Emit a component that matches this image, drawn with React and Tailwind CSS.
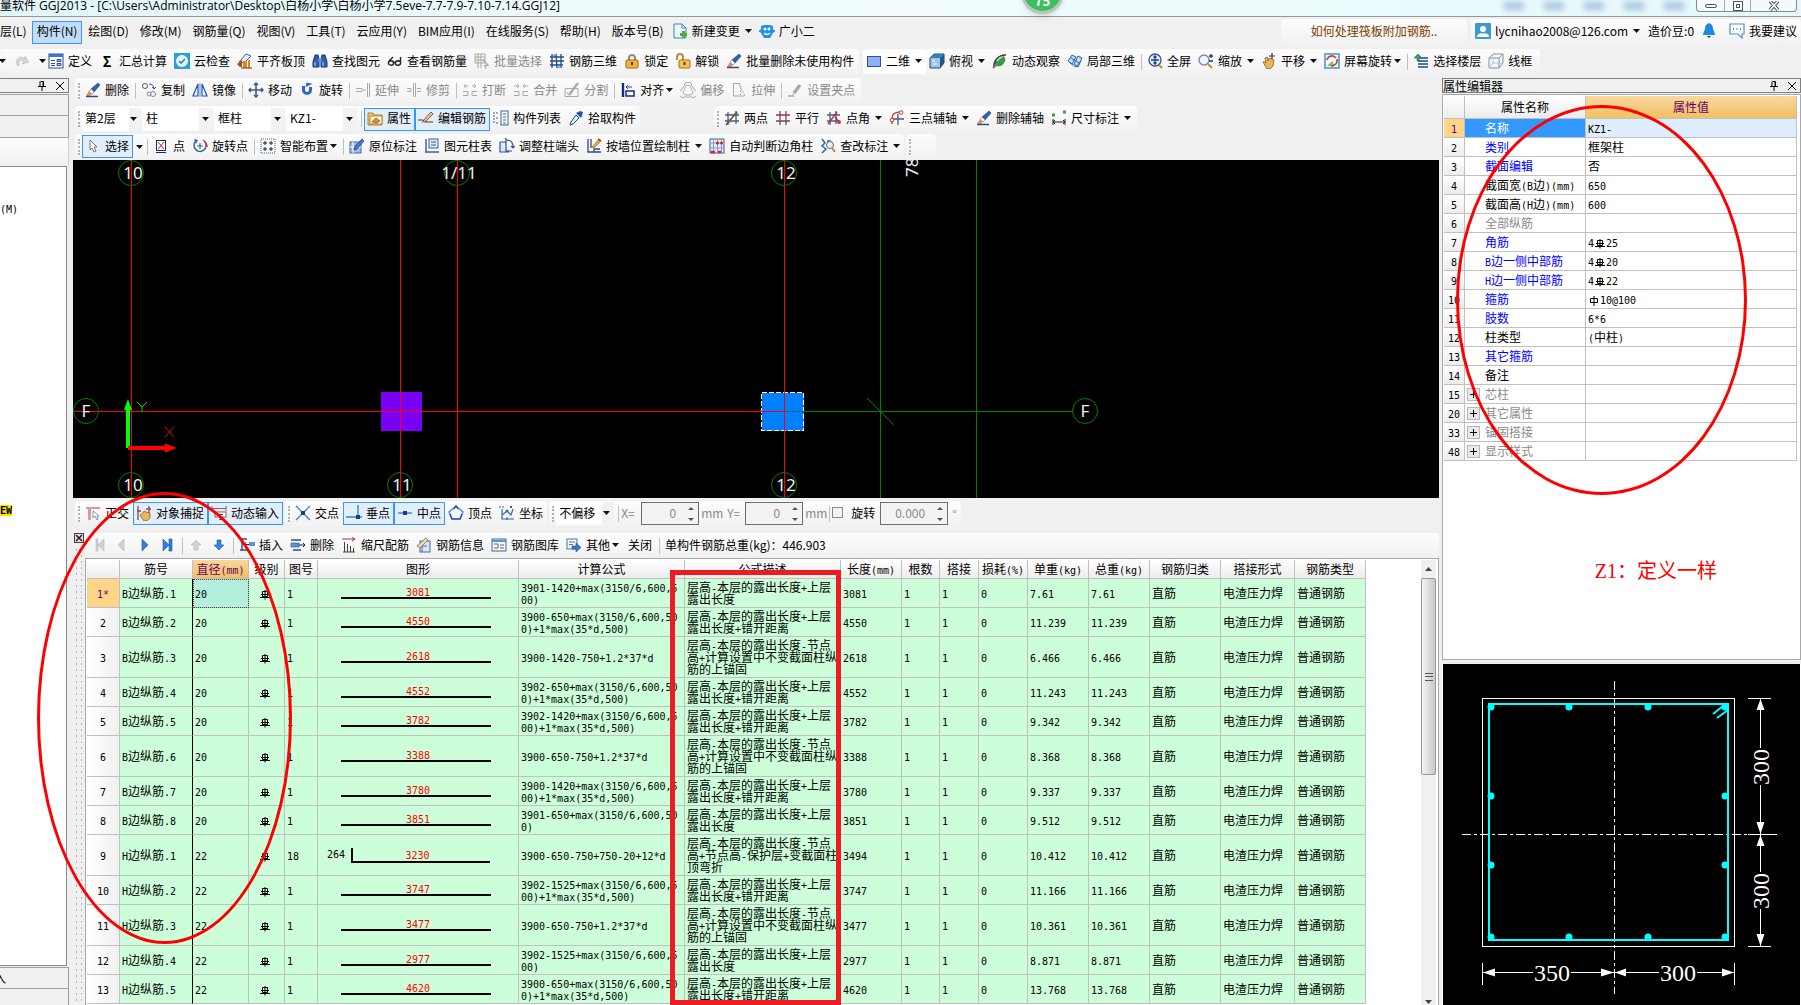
import clsx from "clsx";

// 16x16 toolbar drawings
const ICONS = {
  redo: <path d="M3 12C1 5 7 2 11 6V3l4 6-7 2 2-3C7 6 4 8 5 13z" fill="#d6d6d6" stroke="#b5b5b5" strokeWidth=".6" />,
  define: (
    <>
      <rect x="1" y="1" width="14" height="14" fill="#fff" stroke="#2f4f8f" />
      <rect x="1" y="1" width="14" height="3" fill="#3f74c9" />
      <path d="M3 7.500h4M3 10.500h4M9 6.500h4v2H9zM9 10.500h4v2H9zM3 12.500h4" stroke="#2f4f8f" fill="#a8c4ee" />
    </>
  ),
  cloud: (
    <>
      <rect width="16" height="16" fill="#2f9fdc" />
      <circle cx="8" cy="8" r="6" fill="#e9f6ff" />
      <path d="m5 8 2 2 4-4" fill="none" stroke="#2d86c4" strokeWidth="1.600" />
    </>
  ),
  flush: (
    <>
      <path d="M2 9 9 1l5 2-7 7z" fill="#e8eef8" stroke="#3c61a8" />
      <path d="M0 11l5-4v7H3z" fill="#a94b1c" />
      <path d="M7 15V9h2v6M12 15V7" stroke="#d98a1d" strokeWidth="2" fill="none" />
      <path d="M4 15h11" stroke="#7d2e0c" />
    </>
  ),
  find: (
    <>
      <path d="M3 2h3l1 4v8H1V9zM10 2h3l2 7v5H9V6z" fill="#2f5fae" stroke="#173a78" />
      <path d="M6 6h4v3H6z" fill="#5d8cd6" />
      <path d="M3 9v4M11 9v4" stroke="#b9d2f5" />
    </>
  ),
  glasses: (
    <g fill="none" stroke="#222" strokeWidth="1.400">
      <ellipse cx="4" cy="10" rx="2.600" ry="2.200" />
      <ellipse cx="11" cy="10" rx="2.600" ry="2.200" />
      <path d="M6.500 9.500h2M2 8l4-4M13.500 9V4" />
    </g>
  ),
  batch: (
    <g stroke="#a8a8a8" fill="none">
      <path d="M1 1h10v9H1zM1 4h10M1 7h10M4 1v14M7 1v14" />
      <path d="m9 7 5 5-3 .500 1 3" strokeWidth="1.400" />
    </g>
  ),
  rebar3d: (
    <g stroke="#1e4b82" fill="none" strokeWidth="1.300">
      <path d="M1 4h14M1 8h14M1 12h13M3 1v14M7 1l1 14M12 1v14" />
      <path d="M3 3 8 1M8 15l5-2" stroke="#5c92cc" />
    </g>
  ),
  lock: (
    <>
      <path d="M5 8V5a3 3 0 0 1 6 0v3" fill="none" stroke="#8c8c8c" strokeWidth="2" />
      <rect x="2" y="7" width="12" height="8" rx="1" fill="#eeb53a" stroke="#9c6d10" />
      <path d="M8 9v3" stroke="#5a3a00" strokeWidth="2" />
    </>
  ),
  unlock: (
    <>
      <path d="M2 7V4a3 3 0 0 1 6 0v4" fill="none" stroke="#b2903f" strokeWidth="2" />
      <rect x="4" y="7" width="11" height="8" rx="1" fill="#f3c558" stroke="#9c6d10" />
      <path d="M9.500 9v3" stroke="#5a3a00" strokeWidth="2" />
    </>
  ),
  brush: (
    <>
      <path d="M13 1 15 3 9 10 6 7z" fill="#2d62b8" stroke="#173a78" strokeWidth=".6" />
      <path d="M6 7l3 3-2 2-3-3z" fill="#fff" stroke="#8a8a8a" strokeWidth=".7" />
      <path d="M4 9l3 3-2 2H1z" fill="#e08a68" />
      <path d="M1 14.500h12" stroke="#2e5276" strokeWidth="1.500" />
    </>
  ),
  plane: <rect x="1.500" y="3.500" width="13" height="10" fill="#8fb0f7" stroke="#2b4fae" />,
  cube: (
    <>
      <path d="M1 5 5 1h10v9l-4 5H1z" fill="#9cc6ea" stroke="#21496f" />
      <path d="M1 5h10l4-4H5z" fill="#3c7db5" />
      <path d="M11 5v10l4-5V1z" fill="#245a8a" />
      <path d="M3 8h3M4 11h4" stroke="#fff" />
    </>
  ),
  orbit: (
    <>
      <ellipse cx="8" cy="8" rx="6" ry="4.500" transform="rotate(-45 8 8)" fill="#2f9e44" />
      <path d="M2 14C1 8 8 1 14 2" fill="none" stroke="#2b3f55" strokeWidth="1.500" />
      <path d="M5 8c2-3 4-4 6-4" stroke="#bdf0c4" strokeWidth="1.500" fill="none" />
      <circle cx="11" cy="5" r="1.500" fill="#e8534a" />
      <path d="m1 15 4-4" stroke="#777" strokeWidth="2" />
    </>
  ),
  local3d: (
    <g fill="#c4dcf4" stroke="#2b5f9a">
      <path d="M1 8 5 2l4 2-4 7z" />
      <path d="m7 11 4-8 4 2-4 9z" />
      <path d="m3 10 6 4 5-6M4 5l8 5" fill="none" />
    </g>
  ),
  fullscreen: (
    <>
      <circle cx="8" cy="7" r="6" fill="#e4effc" stroke="#3a5583" strokeWidth="1.300" />
      <path d="M8 3v8M4 7h8M6.500 4.500 8 3l1.500 1.500M6.500 9.500 8 11l1.500-1.500" stroke="#1c3f86" strokeWidth="1.300" fill="none" />
      <path d="m12 12 3 3" stroke="#c8862c" strokeWidth="2" />
    </>
  ),
  zoom: (
    <>
      <circle cx="6" cy="7" r="5" fill="#eef5fd" stroke="#7c8ca5" strokeWidth="1.400" />
      <path d="m10 11 4 4" stroke="#c8862c" strokeWidth="2" />
      <path d="M13 1v4M11 3h4M11 8h4" stroke="#203a66" strokeWidth="1.300" />
    </>
  ),
  pan: (
    <>
      <path d="M2 9c1-1 2 0 3 1l-1-5 2-1 1 4 1-3 5 2-1 6-3 3H6z" fill="#e6b85a" stroke="#83602a" strokeWidth=".8" />
      <path d="M11 0v6M8 3h6" stroke="#333" strokeWidth="1.200" />
    </>
  ),
  rotateScreen: (
    <>
      <rect x="1" y="1" width="14" height="14" fill="#fff" stroke="#5fb4dc" strokeWidth="2" />
      <path d="m3 13 5-5 3 5z" fill="#7cc46e" />
      <path d="M3 7a5 5 0 0 1 9-2" fill="none" stroke="#d8403c" strokeWidth="1.800" />
      <path d="M13 6c1 4-2 7-6 7" fill="none" stroke="#d8403c" strokeWidth="1.800" />
    </>
  ),
  floors: (
    <>
      <path d="M5 5h10M5 8h10M5 11h10M5 14h10" stroke="#1d4e86" strokeWidth="1.600" />
      <path d="M1 5 5 1l4 4H6v3H4V5z" fill="#38a169" stroke="#1c5c38" strokeWidth=".5" />
    </>
  ),
  wire: (
    <g fill="none" stroke="#7b92ae">
      <path d="M1 5 5 1h10v9l-4 5H1zM1 5h10v10M11 5l4-4" />
      <path d="M5 1v9h10M5 10l-4 5" stroke="#b5c4d6" />
    </g>
  ),
  copy: (
    <g fill="none" stroke="#555">
      <circle cx="4" cy="4" r="2.500" />
      <circle cx="12" cy="12" r="2.500" stroke="#8a8a8a" />
      <circle cx="8" cy="12" r="2" stroke="#8a8a8a" />
      <path d="M8 2c3 0 5 2 5 5M11 5l2 2 2-2" stroke="#1f57b8" />
    </g>
  ),
  mirror: (
    <g fill="none" stroke="#2456a8" strokeWidth="1.200">
      <path d="M6 2v12H1zM10 2v12h5z" />
      <path d="M8 1v14" stroke="#7ba3dc" />
    </g>
  ),
  move: (
    <g stroke="#32558e" strokeWidth="1.500" fill="none">
      <path d="M8 1v14M1 8h14" />
      <path d="M6 3l2-2 2 2M6 13l2 2 2-2M3 6 1 8l2 2M13 6l2 2-2 2" />
    </g>
  ),
  rotate: (
    <>
      <path d="M4.500 4v4a3.500 3.500 0 1 0 7 0V5" fill="none" stroke="#2f66c8" strokeWidth="3" />
      <path d="M7 6V1h6z" fill="#2f66c8" transform="rotate(12 10 3)" />
    </>
  ),
  extend: (
    <g stroke="#aaa" fill="none">
      <path d="M1 6.500h6v3H1M8 8h3" />
      <path d="M12.500 1v14M14.500 1v14" />
    </g>
  ),
  trim: (
    <g stroke="#aaa" fill="none">
      <path d="M1 6.500h4v3H1M11 6.500h4M11 9.500h4" />
      <path d="M7.500 1v14M9.500 1v14" />
    </g>
  ),
  split: (
    <g stroke="#aaa" fill="none">
      <path d="M1 9.500h5v4H1M15 9.500h-5v4h5M2 4h4M10 4h4M4 2 2 4l2 2M12 2l2 2-2 2" />
    </g>
  ),
  merge: (
    <g stroke="#aaa" fill="none">
      <path d="M1 9.500h5v4H1M15 9.500h-5v4h5M1 4h5M10 4h5M4 2l2 2-2 2M12 2l-2 2 2 2" />
    </g>
  ),
  divide: (
    <g stroke="#aaa" fill="none">
      <path d="M1 6.500h13v8H1z" />
      <path d="M5 13 14 1" strokeWidth="2.400" />
      <path d="m2 10 3 3" />
    </g>
  ),
  align: (
    <>
      <path d="M3 1v14" stroke="#172c7a" strokeWidth="2.400" />
      <path d="M6 9h8v5H6z" fill="#fff" stroke="#172c7a" strokeWidth="1.500" />
      <path d="M12 5H6M8 3 6 5l2 2" stroke="#2a3ea0" fill="none" />
    </>
  ),
  offset: (
    <g fill="none" stroke="#aaa">
      <path d="M5 6a3 3 0 0 1 6 0l1 2a3 3 0 0 1-2 5H6a3 3 0 0 1-2-5z" />
      <path d="M4 4a4 4 0 0 1 8 0l3 4a4 4 0 0 1-4 7H5a4 4 0 0 1-4-7z" />
    </g>
  ),
  stretch: (
    <g fill="none" stroke="#aaa">
      <path d="M2 1.500h7v3M2.500 1v13h11" />
      <path d="m9 4 5 10M9.500 5v9" strokeDasharray="2 1" />
    </g>
  ),
  grip: (
    <g fill="none" stroke="#aaa">
      <path d="M1 14h6" strokeWidth="1.500" />
      <path d="M7 11 13 3" strokeWidth="3.500" />
      <path d="M5 14l2-3" />
    </g>
  ),
  props: (
    <>
      <path d="M1 3h5l1 2h8v10H1z" fill="#f0c26a" stroke="#b5832a" />
      <rect x="3" y="6" width="12" height="8" fill="#fff7df" stroke="#b5832a" />
      <path d="m5 12 4-4 4 3-3 2z" fill="#d98f2a" stroke="#6f4510" strokeWidth=".6" />
    </>
  ),
  editBar: (
    <>
      <path d="M0 10h5l2 2h8" stroke="#3a3a3a" fill="none" />
      <path d="m5 11 8-9 2 2-8 8z" fill="#e8c79a" stroke="#5a4020" strokeWidth=".8" />
      <path d="M3 13l2-2 1 1z" fill="#c0392b" />
    </>
  ),
  list: (
    <>
      <rect x="8" y="1" width="7" height="14" fill="#fff" stroke="#3c5f96" />
      <path d="M10 4h3M10 7h3M10 10h3M10 13h3" stroke="#3c5f96" />
      <path d="M1 2v12M3 3h3M3 8h3M3 13h3" stroke="#3c5f96" strokeDasharray="2 1" />
    </>
  ),
  picker: (
    <>
      <path d="m8 5 3 3-6 6-3 1 1-3z" fill="#dcecfb" stroke="#1b4d86" />
      <path d="m8 3 5 5 1-2 1-4-3-1-2 1z" fill="#1f5c9e" />
    </>
  ),
  twoPoint: (
    <>
      <path d="M4 2v13M12 1v13M1 5h14M1 11h14" stroke="#4a5b86" strokeWidth="1.300" />
      <path d="m2 15 11-13" stroke="#8c2a2a" strokeWidth="1.300" />
      <circle cx="12" cy="4" r="1.700" fill="#2e8b3d" />
      <circle cx="5" cy="11" r="1.700" fill="#2e8b3d" />
    </>
  ),
  parallel: (
    <>
      <path d="M5 1v14M11 1v14" stroke="#4a5b86" strokeWidth="1.300" />
      <path d="M1 5h14M1 11h14" stroke="#a33" strokeWidth="1.300" />
    </>
  ),
  pointAngle: (
    <>
      <path d="M4 2v13M10 1v13M1 5h13M1 11h10" stroke="#4a5b86" strokeWidth="1.300" />
      <path d="m2 14 9-12M9 7l4 5" stroke="#b33" strokeWidth="1.300" />
      <circle cx="13" cy="12" r="2" fill="#d33" />
    </>
  ),
  threePoint: (
    <>
      <path d="M9 4v11M4 9h11" stroke="#4a5b86" strokeWidth="1.300" />
      <path d="M3 14V8c0-4 3-6 9-6" fill="none" stroke="#c33" strokeWidth="1.300" />
      <circle cx="3" cy="10" r="1.800" fill="#fff" stroke="#c33" />
      <circle cx="12" cy="2.500" r="1.800" fill="#fff" stroke="#c33" />
    </>
  ),
  dim: (
    <>
      <path d="M1 5h3M12 2h3" stroke="#3ba34a" strokeWidth="3" />
      <path d="M2 9v6M14 9v6M2 12h12M4 10l-2 2 2 2M12 10l2 2-2 2" stroke="#222" fill="none" />
    </>
  ),
  cursor: <path d="M5 2v10l2-2 2 4 2-1-2-4h3z" fill="#fff" stroke="#777" />,
  point: (
    <>
      <rect x="3.500" y="2.500" width="9" height="10" fill="#fff" stroke="#1b2a6b" />
      <path d="m5 4 6 7M11 4l-6 7" stroke="#b22" />
      <path d="M3 14.500h10" stroke="#1b2a6b" />
    </>
  ),
  rotPoint: (
    <>
      <path d="M4 3a6 6 0 1 0 9 1" fill="none" stroke="#41618f" strokeWidth="1.500" />
      <path d="M8 5v6M5 8h6" stroke="#41618f" strokeWidth="1.200" />
      <path d="m2 1 4 1-2 4z" fill="#2b64b8" />
      <path d="M11 2c3 2 4 4 4 7" fill="none" stroke="#c33" strokeWidth="1.500" />
    </>
  ),
  smart: (
    <g stroke="#222" fill="none">
      <rect x="1" y="1" width="14" height="14" strokeDasharray="1 1" stroke="#3a64a5" />
      <path d="M5 3v4M3 5h4M11 3v4M9 5h4M5 9v4M3 11h4M11 9v4M9 11h4" />
    </g>
  ),
  inPlace: (
    <>
      <rect x="1" y="4" width="11" height="11" fill="#9dbbe8" stroke="#426aa8" />
      <path d="M4 4v11M1 9h11" stroke="#fff" />
      <path d="m5 12 1-4 7-7 2 2-7 8z" fill="#3d7bc6" stroke="#1c3c6e" strokeWidth=".7" />
    </>
  ),
  colTable: (
    <>
      <path d="M2 1v13M1 14h14" stroke="#3c5f96" strokeWidth="1.400" />
      <rect x="5" y="1" width="9" height="9" fill="#dfe9f8" stroke="#3c5f96" />
      <path d="M7 4h5M7 7h5" stroke="#3c5f96" />
    </>
  ),
  colEnd: (
    <g fill="none" stroke="#35558e" strokeWidth="1.200">
      <path d="M1 4h6v9h6M1 4v10h9" fill="#dbe7f8" />
      <path d="M8 2c4 0 6 3 6 7M6 4l2-2-2-2M12 8l2 2 2-2" />
    </g>
  ),
  wallDraw: (
    <>
      <path d="M2 1v13h13M5 1v9M8 14v-3h6" stroke="#2e4a86" fill="none" strokeWidth="1.300" />
      <path d="m6 9 7-8 2 2-7 7z" fill="#e3b04a" stroke="#80541b" strokeWidth=".6" />
      <path d="M12 1l3 2" stroke="#c33" strokeWidth="1.600" />
    </>
  ),
  autoCol: (
    <>
      <rect x="1" y="1" width="14" height="14" fill="#e4eefb" stroke="#3c5f96" />
      <path d="M4.500 1v14M8.500 1v14M12.500 1v14M1 5h14M1 10h14" stroke="#7d9fd0" />
      <circle cx="8.500" cy="5" r="1.600" fill="#d22" />
      <circle cx="12.500" cy="5" r="1.600" fill="#d22" />
      <path d="M2 14h4M9 14h3" stroke="#d22" strokeWidth="2.500" />
    </>
  ),
  checkDim: (
    <>
      <path d="M2 1l3 4-3 3 4 3-4 4M7 3h4" stroke="#2a66ad" fill="none" strokeWidth="1.500" />
      <circle cx="10" cy="7" r="3.500" fill="#eaf3fd" stroke="#666" />
      <path d="m12 10 3 4" stroke="#c8862c" strokeWidth="2" />
    </>
  ),
  ortho: (
    <>
      <path d="M1 2h14v2H6v11H3V4H1z" fill="#d99a9a" />
      <path d="M8 6v7l2-2 2 4 1-1-1-3h2z" fill="#fff" stroke="#5d7fa8" strokeWidth=".8" />
    </>
  ),
  snap: (
    <>
      <path d="M2 1v14M1 6h4M13 1v8M10 4h5" stroke="#8b4a4a" strokeWidth="1.300" />
      <path d="M4 10c2-1 3-2 4-4l2 1 4 1v5l-3 3H8z" fill="#e6b85a" stroke="#83602a" strokeWidth=".8" />
    </>
  ),
  dyn: (
    <>
      <path d="M1 1v5M15 1v5M1 3.500h14" stroke="#a05a5a" />
      <rect x="4" y="7" width="11" height="5" fill="#fff" stroke="#6a6a6a" />
      <path d="M6 9.500h6" stroke="#333" />
      <path d="M8 15h5l-2-3z" fill="#333" />
    </>
  ),
  cross: (
    <>
      <path d="m1 1 14 14M15 1 1 15" stroke="#3f7fc4" strokeWidth="1.300" />
      <rect x="6" y="6" width="4" height="4" fill="#1c3c8a" />
    </>
  ),
  perp: (
    <>
      <path d="M0 12h16M12 0v12" stroke="#3f7fc4" strokeWidth="1.400" />
      <rect x="10" y="10" width="4" height="4" fill="#1c3c8a" />
    </>
  ),
  mid: (
    <>
      <path d="M1 8h14" stroke="#3f7fc4" strokeWidth="1.400" />
      <rect x="6" y="6" width="4" height="4" fill="#1c3c8a" />
    </>
  ),
  vertex: (
    <>
      <path d="M8 1 15 7l-3 7H4L1 7z" fill="none" stroke="#4f8ed0" strokeWidth="1.400" />
      <path d="m6 4 2-3 2 3M2 9l2 5h8l2-5" fill="none" stroke="#1c3c8a" strokeWidth="1.200" />
    </>
  ),
  coord: (
    <>
      <path d="M3 4v10h12M3 10l5-4 4 4 2-6" fill="none" stroke="#2d6aab" strokeWidth="1.200" />
      <path d="M1 1v2M4 1v2M11 1l2 2M13 1l-2 2M8 12v3" stroke="#333" strokeWidth=".8" />
      <circle cx="8" cy="6" r="1.500" fill="#2d6aab" />
    </>
  ),
  first: <path d="M5 2h2v12H5zM13 2v12L7 8z" fill="#d2d2d2" stroke="#b5b5b5" strokeWidth=".6" />,
  prev: <path d="M10 2v12L4 8z" fill="#d2d2d2" stroke="#b5b5b5" strokeWidth=".6" />,
  next: <path d="M5 2v12l6-6z" fill="#2f7fe0" stroke="#1b56a8" strokeWidth=".6" />,
  last: <path d="M3 2v12l6-6zM9 2h3v12H9z" fill="#2f7fe0" stroke="#1b56a8" strokeWidth=".6" />,
  up: <path d="M8 3 13 8h-3v5H6V8H3z" fill="#d2d2d2" stroke="#b5b5b5" strokeWidth=".6" />,
  down: <path d="M8 13 13 8h-3V3H6v5H3z" fill="#3b82e0" stroke="#1b56a8" strokeWidth=".6" />,
  insert: (
    <>
      <path d="M1 2h7M1 13h7M3 2v11" stroke="#2c4f86" strokeWidth="1.400" />
      <path d="M4 7.500h6M7 5.500l-2 2 2 2" stroke="#222" fill="none" />
      <rect x="10" y="5" width="6" height="4" fill="#5b93db" />
    </>
  ),
  remove: (
    <>
      <path d="M1 3h10M3 13h8" stroke="#2c4f86" strokeWidth="1.400" />
      <rect x="1" y="6" width="8" height="4" fill="#5b93db" stroke="#2c4f86" strokeWidth=".6" />
      <path d="M9 8h6M13 6l2 2-2 2" stroke="#222" fill="none" />
    </>
  ),
  scale: (
    <>
      <path d="M1 2h13M11 .500l3 1.500-3 2" stroke="#a33" fill="none" />
      <path d="M3.500 5v10M6.500 7v8M9.500 9v6M12.500 11v4M2 15h12" stroke="#444" fill="none" />
    </>
  ),
  info: (
    <>
      <rect x="4" y="4" width="10" height="11" fill="#d8e6f7" stroke="#4a6b9c" />
      <path d="M1 9 10 1l2 2-8 8z" fill="#eadbb8" stroke="#7c5b2a" strokeWidth=".7" />
      <path d="M6 15V9h5" stroke="#4a6b9c" fill="none" />
    </>
  ),
  library: (
    <>
      <rect x="1" y="2" width="14" height="12" fill="#eef6ff" stroke="#3a6b8c" />
      <path d="M1 4h14" stroke="#4d9bc8" strokeWidth="2" />
      <path d="M3 7h4v4H3M9 8h4M9 11h4" stroke="#7d6a3a" fill="none" />
    </>
  ),
  other: (
    <>
      <rect x="1" y="2" width="10" height="10" fill="#f3f7fd" stroke="#5474a6" />
      <path d="M3 5h6M3 7.500h4" stroke="#5474a6" />
      <path d="M6 9h4V6l5 4.500-5 4.500v-3H6z" fill="#3678d2" stroke="#1d4c93" strokeWidth=".6" />
    </>
  ),
  newDoc: (
    <>
      <path d="M2 1h8l4 4v10H2z" fill="#eaf5fd" stroke="#3b87b8" />
      <path d="M10 1v4h4" fill="none" stroke="#3b87b8" />
      <path d="M11.500 8v7M8 11.500h7" stroke="#4caf2f" strokeWidth="3" />
    </>
  ),
  mascot: (
    <>
      <path d="M2 3 5 2h6l3 1v7l-3 5H5l-3-5z" fill="#1f93e0" />
      <circle cx="1.500" cy="8" r="1.500" fill="#1f93e0" />
      <circle cx="14.500" cy="8" r="1.500" fill="#1f93e0" />
      <circle cx="6" cy="6" r="1.500" fill="#fff" />
      <circle cx="10" cy="6" r="1.500" fill="#fff" />
      <path d="M5 10c2 2 4 2 6 0" stroke="#fff" fill="none" strokeWidth="1.300" />
    </>
  ),
  user: (
    <>
      <rect width="16" height="16" rx="1" fill="#3d9bd0" />
      <circle cx="8" cy="6" r="3" fill="#fff" />
      <path d="M2 13c1-4 11-4 12 0v1H2z" fill="#fff" />
      <path d="M7 9h2l-1 3z" fill="#3d9bd0" />
    </>
  ),
  bell: (
    <>
      <path d="M8 0c3 1 4 3 4 6l2 5v1H2v-1l2-5c0-3 1-5 4-6z" fill="#1e88e5" />
      <path d="M6 13h4l-2 2z" fill="#123a63" />
    </>
  ),
  chat: (
    <>
      <path d="M1 1h14v10h-2v4l-4-4H1z" fill="#fff" stroke="#4a90d0" strokeWidth="1.200" />
      <path d="M4 6h1M7.500 6h1M11 6h1" stroke="#2a5f9a" strokeWidth="1.500" />
    </>
  ),
};

function Icon({ name }) {
  return (
    <svg className="size-4 shrink-0" viewBox="0 0 16 16" aria-hidden="true">
      {ICONS[name]}
    </svg>
  );
}

function Arrow({ tight }) {
  return (
    <svg className={clsx("h-1 w-[7px] shrink-0", tight ? "-ml-0.5" : "ml-px")} viewBox="0 0 7 4" aria-hidden="true">
      <path d="M0 0h7L3.500 4z" fill="#111" />
    </svg>
  );
}

const Grip = () => <div className="mr-0.5 ml-[3px] h-4 shrink-0 border-l-2 border-dotted border-[#b4b4b4]" />;
const Sep = () => <div className="mx-0.5 h-4 w-px shrink-0 bg-[#c0c0c0]" />;

function Tool({ icon, label, active, off, menu, tight }) {
  return (
    <button
      type="button"
      aria-label={label || icon}
      className={clsx(
        "flex h-[23px] shrink-0 items-center gap-1 border pr-[3px] pb-0.5 pl-0.5 whitespace-nowrap",
        active ? "border-[#3399ff] bg-[#e3eefb]" : "border-transparent",
        off && "text-[#8a8a8a]",
      )}
    >
      {icon === "sigma" ? <span className="w-4 text-center text-sm leading-4 font-bold">Σ</span> : icon && <Icon name={icon} />}
      {label}
      {menu && <Arrow tight={tight} />}
    </button>
  );
}

// "|" is a separator, everything else is a Tool
function Tools({ items }) {
  return items.map((it, i) => (it === "|" ? <Sep key={i} /> : <Tool key={i} {...it} />));
}

function Bar({ className, children }) {
  return (
    <div className={clsx("flex h-[26px] shrink-0 items-center rounded-sm bg-linear-to-b from-[#fdfdfd] to-[#f1f1f1]", className)}>
      {children}
    </div>
  );
}

function Combo({ label, value, className }) {
  return (
    <div className={clsx("relative mr-0.5 h-[23px] shrink-0 bg-linear-to-r from-white from-80% to-[#f2f2f2] to-80%", className)}>
      <select aria-label={label} className="h-full w-full appearance-none pr-3 pb-0.5 pl-[3px] outline-none">
        <option>{value}</option>
      </select>
      <span className="pointer-events-none absolute top-[9px] right-1 flex">
        <Arrow />
      </span>
    </div>
  );
}

function Spin({ name, value, className }) {
  return (
    <span className={clsx("flex h-[23px] shrink-0 items-center border border-[#6d6d6d] bg-[#f3f3f3]", className)}>
      <input aria-label={name} defaultValue={value} className="w-full min-w-0 pr-3 pb-0.5 text-right text-[#8a8a8a] outline-none" />
      <svg className="mr-1 h-4 w-1.5 shrink-0" viewBox="0 0 6 16" aria-hidden="true">
        <path d="M0 4 3 1l3 3zM0 12l3 3 3-3z" fill="#555" />
      </svg>
    </span>
  );
}

// rebar grade marks: plain bar and ribbed bar
function Mark({ ribbed }) {
  return (
    <svg className="mx-px inline-block size-2.5 align-[-2px]" viewBox="0 0 10 10" role="img" aria-label="直径">
      <path
        d={ribbed ? "M2.500 1.500h5v5h-5zM5 0v9.500M1 4.500h8M0 7.500h10" : "M1.500 2.500h7v4h-7zM5 0v10"}
        fill="none"
        stroke="currentColor"
      />
    </svg>
  );
}

// half-width runs are set in the mono face so that they take half of a full-width cell
function Txt({ children }) {
  return String(children)
    .split(/([ΦⅢ]|[\x20-\x7e]+)/)
    .map((part, i) => {
      if (part === "Φ" || part === "Ⅲ") return <Mark key={i} ribbed={part === "Ⅲ"} />;
      if (/^[\x20-\x7e]+$/.test(part)) {
        return (
          <span key={i} className="font-['DejaVu_Sans_Mono',monospace] text-[10px] leading-0">
            {part}
          </span>
        );
      }
      return part;
    });
}

const MENUS = ["构件(N)", "绘图(D)", "修改(M)", "钢筋量(Q)", "视图(V)", "工具(T)", "云应用(Y)", "BIM应用(I)", "在线服务(S)", "帮助(H)", "版本号(B)"];

const MAIN_TOOLS = [
  { icon: "define", label: "定义" },
  { icon: "sigma", label: "汇总计算" },
  { icon: "cloud", label: "云检查" },
  { icon: "flush", label: "平齐板顶" },
  { icon: "find", label: "查找图元" },
  { icon: "glasses", label: "查看钢筋量" },
  { icon: "batch", label: "批量选择", off: true },
  { icon: "rebar3d", label: "钢筋三维" },
  { icon: "lock", label: "锁定" },
  { icon: "unlock", label: "解锁" },
  { icon: "brush", label: "批量删除未使用构件" },
];

const VIEW_TOOLS = [
  { icon: "cube", label: "俯视", menu: true },
  { icon: "orbit", label: "动态观察" },
  { icon: "local3d", label: "局部三维" },
  "|",
  { icon: "fullscreen", label: "全屏" },
  { icon: "zoom", label: "缩放", menu: true },
  { icon: "pan", label: "平移", menu: true },
  { icon: "rotateScreen", label: "屏幕旋转", menu: true, tight: true },
  "|",
  { icon: "floors", label: "选择楼层" },
  { icon: "wire", label: "线框" },
];

const EDIT_TOOLS = [
  { icon: "brush", label: "删除" },
  "|",
  { icon: "copy", label: "复制" },
  { icon: "mirror", label: "镜像" },
  "|",
  { icon: "move", label: "移动" },
  { icon: "rotate", label: "旋转" },
  "|",
  { icon: "extend", label: "延伸", off: true },
  { icon: "trim", label: "修剪", off: true },
  "|",
  { icon: "split", label: "打断", off: true },
  { icon: "merge", label: "合并", off: true },
  { icon: "divide", label: "分割", off: true },
  "|",
  { icon: "align", label: "对齐", menu: true, tight: true },
  { icon: "offset", label: "偏移", off: true },
  { icon: "stretch", label: "拉伸", off: true },
  "|",
  { icon: "grip", label: "设置夹点", off: true },
];

const MEMBER_TOOLS = [
  "|",
  { icon: "props", label: "属性", active: true },
  { icon: "editBar", label: "编辑钢筋", active: true },
  { icon: "list", label: "构件列表" },
  { icon: "picker", label: "拾取构件" },
];

const AXIS_TOOLS = [
  { icon: "twoPoint", label: "两点" },
  { icon: "parallel", label: "平行" },
  { icon: "pointAngle", label: "点角", menu: true },
  { icon: "threePoint", label: "三点辅轴", menu: true },
  { icon: "brush", label: "删除辅轴" },
  { icon: "dim", label: "尺寸标注", menu: true },
];

const DRAW_TOOLS = [
  "|",
  { icon: "point", label: "点" },
  { icon: "rotPoint", label: "旋转点" },
  "|",
  { icon: "smart", label: "智能布置", menu: true, tight: true },
  "|",
  { icon: "inPlace", label: "原位标注" },
  { icon: "colTable", label: "图元柱表" },
  { icon: "colEnd", label: "调整柱端头" },
  { icon: "wallDraw", label: "按墙位置绘制柱", menu: true },
  { icon: "autoCol", label: "自动判断边角柱" },
  { icon: "checkDim", label: "查改标注", menu: true },
];

const SNAP_TOOLS = [
  { icon: "cross", label: "交点" },
  { icon: "perp", label: "垂点", active: true },
  { icon: "mid", label: "中点", active: true },
  { icon: "vertex", label: "顶点" },
  { icon: "coord", label: "坐标" },
];

const REBAR_TOOLS = [
  { icon: "first", off: true },
  { icon: "prev", off: true },
  { icon: "next" },
  { icon: "last" },
  "|",
  { icon: "up", off: true },
  { icon: "down" },
  "|",
  { icon: "insert", label: "插入" },
  { icon: "remove", label: "删除" },
  { icon: "scale", label: "缩尺配筋" },
  { icon: "info", label: "钢筋信息" },
  { icon: "library", label: "钢筋图库" },
  { icon: "other", label: "其他", menu: true, tight: true },
];

const COLS = [
  ["", "w-[33px]"],
  ["筋号", "w-[73px]"],
  ["直径(mm)", "w-[56px]"],
  ["级别", "w-[36px]"],
  ["图号", "w-[33px]"],
  ["图形", "w-[201px]"],
  ["计算公式", "w-[166px]"],
  ["公式描述", "w-[156px]"],
  ["长度(mm)", "w-[61px]"],
  ["根数", "w-[38px]"],
  ["搭接", "w-[39px]"],
  ["损耗(%)", "w-[49px]"],
  ["单重(kg)", "w-[61px]"],
  ["总重(kg)", "w-[61px]"],
  ["钢筋归类", "w-[71px]"],
  ["搭接形式", "w-[74px]"],
  ["钢筋类型", "w-[71px]"],
];

const EXPOSED = "层高-本层的露出长度+上层\n露出长度";
const STAGGERED = "层高-本层的露出长度+上层\n露出长度+错开距离";
const ANCHORED = "层高-本层的露出长度-节点\n高+计算设置中不变截面柱纵\n筋的上锚固";
const BENT = "层高-本层的露出长度-节点\n高+节点高-保护层+变截面柱\n顶弯折";

const BARS = [
  ["B边纵筋.1", 20, 3081, "3901-1420+max(3150/6,600,5\n00)", EXPOSED, "7.61"],
  ["B边纵筋.2", 20, 4550, "3900-650+max(3150/6,600,50\n0)+1*max(35*d,500)", STAGGERED, "11.239"],
  ["B边纵筋.3", 20, 2618, "3900-1420-750+1.2*37*d", ANCHORED, "6.466"],
  ["B边纵筋.4", 20, 4552, "3902-650+max(3150/6,600,50\n0)+1*max(35*d,500)", STAGGERED, "11.243"],
  ["B边纵筋.5", 20, 3782, "3902-1420+max(3150/6,600,5\n00)+1*max(35*d,500)", STAGGERED, "9.342"],
  ["B边纵筋.6", 20, 3388, "3900-650-750+1.2*37*d", ANCHORED, "8.368"],
  ["B边纵筋.7", 20, 3780, "3900-1420+max(3150/6,600,5\n00)+1*max(35*d,500)", STAGGERED, "9.337"],
  ["B边纵筋.8", 20, 3851, "3901-650+max(3150/6,600,50\n0)", EXPOSED, "9.512"],
  ["H边纵筋.1", 22, 3494, "3900-650-750+750-20+12*d", BENT, "10.412", [264, 3230]],
  ["H边纵筋.2", 22, 3747, "3902-1525+max(3150/6,600,5\n00)+1*max(35*d,500)", STAGGERED, "11.166"],
  ["H边纵筋.3", 22, 3477, "3900-650-750+1.2*37*d", ANCHORED, "10.361"],
  ["H边纵筋.4", 22, 2977, "3902-1525+max(3150/6,600,5\n00)", EXPOSED, "8.871"],
  ["H边纵筋.5", 22, 4620, "3900-650+max(3150/6,600,50\n0)+1*max(35*d,500)", STAGGERED, "13.768"],
];

const PROPS = [
  [1, "名称", "KZ1-"],
  [2, "类别", "框架柱", "blue"],
  [3, "截面编辑", "否", "blue"],
  [4, "截面宽(B边)(mm)", "650"],
  [5, "截面高(H边)(mm)", "600"],
  [6, "全部纵筋", "", "gray"],
  [7, "角筋", "4Ⅲ25", "blue"],
  [8, "B边一侧中部筋", "4Ⅲ20", "blue"],
  [9, "H边一侧中部筋", "4Ⅲ22", "blue"],
  [10, "箍筋", "Φ10@100", "blue"],
  [11, "肢数", "6*6", "blue"],
  [12, "柱类型", "(中柱)"],
  [13, "其它箍筋", "", "blue"],
  [14, "备注", ""],
  [15, "芯柱", "", "gray", true],
  [20, "其它属性", "", "gray", true],
  [33, "锚固搭接", "", "gray", true],
  [48, "显示样式", "", "gray", true],
];

function BarShape({ length, bent }) {
  if (bent) {
    return (
      <div className="flex items-center gap-1.5 pl-[9px]">
        <Txt>{bent[0]}</Txt>
        <div className="h-[15px] w-[139px] border-b-2 border-l-2 border-black pr-2 text-center text-[#ff0000]">
          <Txt>{bent[1]}</Txt>
        </div>
      </div>
    );
  }
  return (
    <div className="mb-0.5 ml-[23px] w-[150px] border-b-2 border-black pl-1 text-center text-[#ff0000]">
      <Txt>{length}</Txt>
    </div>
  );
}

function RebarTable() {
  const td = "border-r border-b border-[#c0c0c0] pl-0.5";
  return (
    <table className="w-[1279px] shrink-0 table-fixed border-separate border-spacing-0 self-start leading-3">
      <thead>
        <tr className="h-[19px]">
          {COLS.map(([name, w], i) => (
            <th
              key={i}
              scope="col"
              className={clsx(
                "border-r border-b border-[#c0c0c0] p-0 font-normal whitespace-nowrap",
                w,
                i === 2 ? "bg-linear-to-b from-[#f9d79c] to-[#f2c063] text-[#660066]" : "bg-linear-to-b from-white to-[#ececec]",
              )}
            >
              <Txt>{name}</Txt>
            </th>
          ))}
        </tr>
      </thead>
      <tbody className="bg-[#ccffd9]">
        {BARS.map(([name, dia, len, formula, note, weight, bent], i) => (
          <tr key={name} className={note.split("\n").length > 2 ? "h-[41px]" : "h-[29px]"}>
            <th
              scope="row"
              className={clsx(
                "border-r border-b border-[#c0c0c0] p-0 font-normal",
                i === 0 ? "bg-[#ffd58a] text-[#660066]" : "bg-linear-to-r from-white to-[#f0f0f0]",
              )}
            >
              <Txt>{i === 0 ? "1*" : i + 1}</Txt>
            </th>
            <td className="border-r border-b border-r-black border-b-[#c0c0c0] pl-0.5"><Txt>{name}</Txt></td>
            <td className={clsx(td, i === 0 && "bg-[#b4efdd] outline-1 -outline-offset-1 outline-[#444] outline-dotted")}><Txt>{dia}</Txt></td>
            <td className="border-r border-b border-[#c0c0c0] pr-[3px] pl-0 text-center"><Txt>Ⅲ</Txt></td>
            <td className={td}><Txt>{bent ? 18 : 1}</Txt></td>
            <td className="border-r border-b border-[#c0c0c0] p-0"><BarShape length={len} bent={bent} /></td>
            <td className={clsx(td, "whitespace-pre")}><Txt>{formula}</Txt></td>
            <td className={clsx(td, "whitespace-pre")}><Txt>{note}</Txt></td>
            <td className={td}><Txt>{len}</Txt></td>
            <td className={td}><Txt>1</Txt></td>
            <td className={td}><Txt>1</Txt></td>
            <td className={td}><Txt>0</Txt></td>
            <td className={td}><Txt>{weight}</Txt></td>
            <td className={td}><Txt>{weight}</Txt></td>
            <td className={td}>直筋</td>
            <td className={td}>电渣压力焊</td>
            <td className={td}>普通钢筋</td>
          </tr>
        ))}
      </tbody>
    </table>
  );
}

function PlanView() {
  const axes = [[58, 13, "10"], [384, 13, "1/11"], [711, 13, "12"], [58, 325, "10"], [327, 325, "11"], [711, 325, "12"], [13, 251, "F"], [1012, 251, "F"]];
  return (
    <svg className="h-[338px] w-full shrink-0 bg-black" role="img" aria-label="平面图">
      <g shapeRendering="crispEdges">
        <path d="M807.500 0v338M903.500 0v338M711 251.500h288" stroke="#008000" />
        <rect x="308" y="232" width="41" height="39" fill="#7a00f5" />
        <rect x="688.500" y="232.500" width="42" height="38" fill="#007fff" stroke="#fff" strokeDasharray="5 2" />
        <path d="M711 251.500h20" stroke="#006060" />
        <path d="M58.500 0v338M327.500 0v338M384.500 0v338M711.500 0v338M0 251.500h711" stroke="#ff0000" />
      </g>
      <path d="m794 238 27 27" stroke="#008000" />
      <path d="M55 288V248" stroke="#00ff00" strokeWidth="4" />
      <path d="M51 250h8l-4-11z" fill="#00ff00" />
      <path d="M55 288h38" stroke="#ff0000" strokeWidth="4" />
      <path d="M92 283.500v9l12-4.500z" fill="#ff0000" />
      <path d="m64 242 5 5 5-5M69 247v5" stroke="#00e000" fill="none" />
      <path d="m92 267 9 10M101 267l-9 10" stroke="#e00000" />
      {axes.map(([x, y, name], i) => (
        <g key={i}>
          <circle cx={x} cy={y} r="12.500" fill="none" stroke="#008000" />
          <text
            x={name === "F" ? x : x + 2}
            y={y + 6}
            textAnchor="middle"
            fill="#f0f0f0"
            className="font-['Noto_Sans',sans-serif] text-[17px]"
          >
            {name}
          </text>
        </g>
      ))}
      <text transform="translate(845 17) rotate(-90)" fill="#f0f0f0" className="font-['Noto_Sans',sans-serif] text-[17px]">
        78
      </text>
    </svg>
  );
}

function SectionView() {
  const dots = [[48, 43], [126, 43], [205, 43], [282, 43], [48, 132], [282, 132], [48, 201], [282, 201], [48, 273], [126, 273], [205, 273], [282, 273]];
  return (
    <svg className="min-h-0 w-full flex-1 bg-black" role="img" aria-label="柱截面">
      <g stroke="#fff" fill="none" shapeRendering="crispEdges">
        <rect x="39.500" y="34.500" width="252" height="248" />
        <path d="M171.500 17v313M19 170.500h317" strokeDasharray="9 3 3 3" />
        <path d="M305 34.500h23M305 282.500h23M317.500 34v50M317.500 121v87M317.500 245v38M305 170.500h23" />
        <path d="M39.500 299v22M291.500 299v22M39 308.500h51M128 308.500h88M254 308.500h38" />
      </g>
      <path
        d="M317.500 35l-4 11h8zM317.500 170l-4-12h8zM317.500 171l-4 11h8zM317.500 282l-4-12h8zM40 308.500l12-4v8zM171 308.500l-13-4v8zM172 308.500l11-4v8zM291 308.500l-12-4v8z"
        fill="#fff"
      />
      <rect x="46" y="40" width="239" height="236" fill="none" stroke="#00ffff" strokeWidth="2" />
      <path d="m270 50 10-8M274 54l11-8" stroke="#00ffff" strokeWidth="2" />
      {dots.map(([x, y]) => (
        <circle key={`${x}-${y}`} cx={x} cy={y} r="3.500" fill="#00ffff" />
      ))}
      <g fill="#fff" textAnchor="middle" className="font-['Liberation_Serif',serif] text-2xl">
        <text x="109" y="317">350</text>
        <text x="235" y="317">300</text>
        <text transform="translate(326 103) rotate(-90)">300</text>
        <text transform="translate(326 227) rotate(-90)">300</text>
      </g>
    </svg>
  );
}

function PanelButtons() {
  return (
    <div className="ml-auto flex items-center gap-2.5 pr-1">
      <button type="button" aria-label="固定">
        <svg className="h-3 w-2 shrink-0" viewBox="0 0 8 12" aria-hidden="true">
          <path d="M2.500 1.500h3v5M2 1.500v5M0 6.500h8M4 7v4M5 2v5" fill="none" stroke="#000" />
        </svg>
      </button>
      <button type="button" aria-label="关闭面板">
        <svg className="size-2 shrink-0" viewBox="0 0 8 8" aria-hidden="true">
          <path d="m0 0 8 8M8 0 0 8" stroke="#000" />
        </svg>
      </button>
    </div>
  );
}

function PropertyPanel() {
  return (
    <aside className="relative mt-px flex w-[359px] shrink-0 flex-col">
      <header className="flex h-[15px] shrink-0 items-center border border-[#808080] leading-3">
        属性编辑器
        <PanelButtons />
      </header>
      <div className="mt-px flex h-[566px] shrink-0 flex-col border border-[#a7a7ac] bg-white p-px pr-[3px]">
        <table className="w-full table-fixed border-separate border-spacing-0 leading-3">
          <thead>
            <tr className="h-[23px]">
              <th className="w-[21px] border-r border-b border-[#c0c0c0] bg-linear-to-b from-white to-[#ececec] p-0" />
              <th scope="col" className="w-[121px] border-r border-b border-[#c0c0c0] bg-linear-to-b from-white to-[#ececec] p-0 font-normal">
                属性名称
              </th>
              <th scope="col" className="border-r border-b border-[#c0c0c0] bg-linear-to-b from-[#f9d79c] to-[#f2c063] p-0 font-normal text-[#660066]">
                属性值
              </th>
            </tr>
          </thead>
          <tbody>
            {PROPS.map(([no, name, value, tone, more], i) => (
              <tr key={no} className="h-[19px]">
                <th
                  scope="row"
                  className={clsx(
                    "border-r border-b border-[#c0c0c0] p-0 font-normal",
                    i === 0 ? "bg-[#ffd58a] text-[#660066]" : "bg-linear-to-b from-white to-[#ececec]",
                  )}
                >
                  <Txt>{no}</Txt>
                </th>
                <td
                  className={clsx(
                    "border-r border-b border-[#c0c0c0] p-0 whitespace-nowrap",
                    i === 0 && "bg-[#3399ff] text-white",
                    tone === "blue" && "text-[#0000ff]",
                    tone === "gray" && "text-[#8a8a8a]",
                  )}
                >
                  <div className="flex items-center">
                    <span className="flex w-5 shrink-0 pl-0.5">
                      {more && (
                        <button
                          type="button"
                          aria-label={`展开${name}`}
                          className="flex size-[13px] items-center justify-center border border-[#b8b8b8] bg-[#e8e8ec]"
                        >
                          <svg className="size-[7px]" viewBox="0 0 7 7" aria-hidden="true">
                            <path d="M0 3.500h7M3.500 0v7" stroke="#000" />
                          </svg>
                        </button>
                      )}
                    </span>
                    <span>
                      <Txt>{name}</Txt>
                    </span>
                  </div>
                </td>
                <td className={clsx("border-r border-b border-[#c0c0c0] pl-0.5", i === 0 && "bg-[#deeeff]")}>
                  <Txt>{value}</Txt>
                </td>
              </tr>
            ))}
          </tbody>
        </table>
        <p className="mt-[98px] mr-20 self-end font-['Liberation_Serif','Noto_Sans_CJK_SC',serif] text-xl leading-6 text-[#ff0000]">
          Z1：定义一样
        </p>
      </div>
      <div className="mt-1 flex min-h-0 flex-1 border-r border-l border-white">
        <SectionView />
      </div>
      <div className="pointer-events-none absolute top-[27px] left-3.5 h-[390px] w-[291px] rounded-[50%] border-3 border-[#ff0000]" />
    </aside>
  );
}

function SidePanel() {
  return (
    <aside className="mt-px mr-1 flex w-[69px] shrink-0 flex-col">
      <header className="flex h-[15px] shrink-0 items-center border-y border-r border-[#808080]">
        <PanelButtons />
      </header>
      <div className="mt-px h-[22px] border-y border-r border-[#a0a0a0]" />
      <div className="h-[22px] border-r border-b border-[#a0a0a0]" />
      <div className="h-7 border-r border-[#d0d0d0] bg-linear-to-b from-[#fdfdfd] to-[#f1f1f1]" />
      <div className="mr-0.5 flex-1 border border-l-0 border-[#828790] bg-white pt-[35px] leading-3">
        <p><Txt>(M)</Txt></p>
        <p className="mt-[289px]">
          <span className="bg-[#ffe600] font-['DejaVu_Sans_Mono',monospace] text-[10px] leading-0 font-bold">EW</span>
        </p>
      </div>
      <div className="mt-px flex h-[22px] items-center overflow-hidden border-y border-r border-[#a0a0a0]">
        <span className="flex w-1.5 justify-end overflow-hidden">入</span>
      </div>
      <div className="h-4 border-r border-[#a0a0a0]" />
    </aside>
  );
}

function ScrollBar() {
  return (
    <div className="mr-0.5 ml-auto flex w-[15px] shrink-0 flex-col items-center bg-[#f0f0f0]">
      <svg className="my-[7px] h-1 w-[7px] shrink-0" viewBox="0 0 7 4" aria-hidden="true">
        <path d="M0 4h7L3.500 0z" fill="#444" />
      </svg>
      <div className="flex h-[197px] w-[15px] shrink-0 items-center justify-center rounded-xs border border-[#979797] bg-linear-to-r from-[#f5f5f5] to-[#c8c8cc]">
        <div className="h-2 w-2 border-y border-[#555] py-0.5">
          <div className="h-px bg-[#555]" />
        </div>
      </div>
      <svg className="mt-auto mb-px h-1 w-[7px] shrink-0" viewBox="0 0 7 4" aria-hidden="true">
        <path d="M0 0h7L3.500 4z" fill="#444" />
      </svg>
    </div>
  );
}

function TitleBar() {
  return (
    <header className="relative flex h-[17px] shrink-0 items-start overflow-hidden border-b border-[#8f9b9c] bg-linear-to-r from-[#e2f6fa] via-[#f2fcfd] to-[#e4f8fa]">
      <h1 className="font-['Open_Sans','Noto_Sans_CJK_SC',sans-serif] leading-3 whitespace-nowrap">
        量软件 GGJ2013 - [C:\Users\Administrator\Desktop\白杨小学\白杨小学7.5eve-7.7-7.9-7.10-7.14.GGJ12]
      </h1>
      <div className="mt-0.5 mr-3 ml-auto flex gap-5 blur-[3px]">
        {[0, 1, 2, 3, 4].map((i) => (
          <span key={i} className="h-2 w-5 bg-[#a8c4e0]" />
        ))}
      </div>
      <div className="mr-1 flex h-3 overflow-hidden rounded-b-sm border border-t-0 border-[#85898c] bg-[#f4fafb]">
        <button type="button" aria-label="最小化" className="flex w-7 items-center justify-center border-r border-[#a5abad]">
          <span className="h-1 w-3 rounded-xs border border-[#555] bg-white" />
        </button>
        <button type="button" aria-label="还原" className="flex w-[26px] items-center justify-center border-r border-[#a5abad]">
          <span className="flex size-2.5 items-center justify-center border border-[#555] bg-white">
            <span className="size-1 border border-[#555]" />
          </span>
        </button>
        <button type="button" aria-label="关闭" className="flex w-[45px] items-center justify-center">
          <svg className="h-2.5 w-3" viewBox="0 0 12 10" aria-hidden="true">
            <path d="m2 0 8 9M10 0 2 9" stroke="#555" strokeWidth="3.500" />
            <path d="m2 0 8 9M10 0 2 9" stroke="#fff" strokeWidth="1.500" />
          </svg>
        </button>
      </div>
    </header>
  );
}

export default function App() {
  return (
    <div className="relative flex h-screen flex-col overflow-hidden bg-[#f0f0f0] font-['Noto_Sans_CJK_SC',sans-serif] text-xs text-black">
      <TitleBar />
      <div className="absolute -top-[29px] left-[1021px] flex size-[43px] items-end justify-center rounded-full border-3 border-[#b9c4bd] bg-[#3cbf5c] pb-1 text-[13px] leading-3 font-bold text-white shadow-md">
        75
      </div>

      <nav className="flex h-[30px] shrink-0 items-center whitespace-nowrap">
        <button type="button" className="pr-[5px] pb-0.5">层(L)</button>
        <div className="flex w-[637px] shrink-0 justify-between">
          {MENUS.map((name, i) => (
            <button
              key={name}
              type="button"
              className={clsx("h-[23px] border px-1 pb-0.5", i === 0 ? "border-[#3399ff] bg-[#c2ddfb]" : "border-transparent")}
            >
              {name}
            </button>
          ))}
        </div>
        <Tool icon="newDoc" label="新建变更" menu />
        <Tool icon="mascot" label="广小二" />
        <Bar className="ml-auto w-[186px] justify-center">
          <a href="#help" className="pb-0.5 text-[#7a3c00]">如何处理筏板附加钢筋..</a>
        </Bar>
        <Bar className="ml-1 w-[330px] pl-px">
          <Tool icon="user" label="lycnihao2008@126.com" menu />
          <span className="px-1 pb-0.5">造价豆:0</span>
          <Tool icon="bell" />
          <span className="ml-auto flex">
            <Tool icon="chat" label="我要建议" />
          </span>
        </Bar>
      </nav>

      <div className="flex h-[30px] shrink-0 items-center gap-1">
        <Bar className="w-[859px]">
          <span className="-ml-0.5 flex w-[42px] items-center gap-2 pb-0.5">
            <Arrow />
            <Icon name="redo" />
            <Arrow />
          </span>
          <span className="ml-[5px] flex">
            <Tools items={MAIN_TOOLS} />
          </span>
        </Bar>
        <Bar className="pr-1">
          <div className="flex bg-white">
            <Tool icon="plane" label="二维" menu />
          </div>
          <Tools items={VIEW_TOOLS} />
        </Bar>
      </div>

      <div className="flex min-h-0 flex-1">
        <SidePanel />

        <main className="mr-[3px] flex min-w-0 flex-1 flex-col">
          <div className="flex h-7 shrink-0 items-center pl-0.5">
            <Bar className="pr-0.5">
              <Grip />
              <Tools items={EDIT_TOOLS} />
            </Bar>
          </div>
          <div className="flex h-7 shrink-0 items-center pl-0.5">
            <Bar className="w-[565px]">
              <Grip />
              <Combo label="楼层" value="第2层" className="w-[59px]" />
              <Combo label="构件类别" value="柱" className="w-[70px]" />
              <Combo label="构件类型" value="框柱" className="w-[70px]" />
              <Combo label="构件" value="KZ1-" className="w-[70px]" />
              <Tools items={MEMBER_TOOLS} />
            </Bar>
            <Bar className="ml-[74px] pr-0.5">
              <Grip />
              <Tools items={AXIS_TOOLS} />
            </Bar>
          </div>
          <div className="flex h-[27px] shrink-0 items-center pl-0.5">
            <Bar>
              <Grip />
              <Tool icon="cursor" label="选择" active />
              <span className="flex w-3 justify-center">
                <Arrow />
              </span>
              <Tools items={DRAW_TOOLS} />
            </Bar>
            <Bar className="ml-0.5 w-[30px]">
              <Grip />
            </Bar>
          </div>

          <PlanView />

          <div className="flex h-[31px] shrink-0 items-center gap-0.5 pl-0.5">
            <Bar>
              <Grip />
              <Tool icon="ortho" label="正交" />
              <Tool icon="snap" label="对象捕捉" active />
              <Tool icon="dyn" label="动态输入" active />
            </Bar>
            <Bar>
              <Grip />
              <Tools items={SNAP_TOOLS} />
            </Bar>
            <Bar className="pr-1 whitespace-nowrap text-[#8a8a8a]">
              <Grip />
              <Combo label="偏移方式" value="不偏移" className="w-[58px] text-black" />
              <Sep />
              <span className="w-5 shrink-0 pb-0.5">X=</span>
              <Spin name="X" value="0" className="w-[58px]" />
              <span className="w-7 shrink-0 pb-0.5 pl-0.5">mm</span>
              <span className="w-[18px] shrink-0 pb-0.5">Y=</span>
              <Spin name="Y" value="0" className="w-[58px]" />
              <span className="w-6 shrink-0 pb-0.5 pl-0.5">mm</span>
              <Sep />
              <label className="flex items-center gap-2 pr-[5px] pb-0.5 text-black">
                <input type="checkbox" className="size-[11px] appearance-none border border-[#8a8a8a] bg-[#f4f4f4]" />
                旋转
              </label>
              <Spin name="旋转角度" value="0.000" className="w-[68px]" />
              <span className="pl-1">°</span>
            </Bar>
          </div>

          <section className="mt-1 flex min-h-0 flex-1">
            <div className="flex w-3 shrink-0 flex-col items-center">
              <button type="button" aria-label="关闭钢筋表" className="h-2.5 w-2.5 shrink-0 border border-[#444] bg-[#f0d8d8]">
                <svg viewBox="0 0 8 8" aria-hidden="true">
                  <path d="m1 1 6 6M7 1 1 7" stroke="#222" strokeWidth="1.500" />
                </svg>
              </button>
              <div className="mt-1 w-2.5 flex-1 bg-[radial-gradient(#b4b4b4_1px,transparent_1px)] bg-[size:5px_6px]" />
            </div>
            <div className="relative flex min-w-0 flex-1 flex-col">
              <Bar className="h-[25px]! pl-[3px] whitespace-nowrap">
                <Tools items={REBAR_TOOLS} />
                <button type="button" className="px-[5px] pb-0.5">关闭</button>
                <Sep />
                <span className="pb-0.5 pl-[3px]">单构件钢筋总重(kg)：446.903</span>
              </Bar>
              <div className="flex min-h-0 flex-1 overflow-hidden border border-b-0 border-[#a7a7ac] bg-white pt-px pl-px">
                <RebarTable />
                <ScrollBar />
              </div>
              <div className="pointer-events-none absolute top-[37px] bottom-0 left-[585px] w-[171px] border-[5px] border-[#ed1c24]" />
            </div>
          </section>
        </main>

        <PropertyPanel />
      </div>

      <div className="pointer-events-none absolute top-[492px] left-[37px] h-[452px] w-[255px] rounded-[50%] border-3 border-[#ff0000]" />
    </div>
  );
}
